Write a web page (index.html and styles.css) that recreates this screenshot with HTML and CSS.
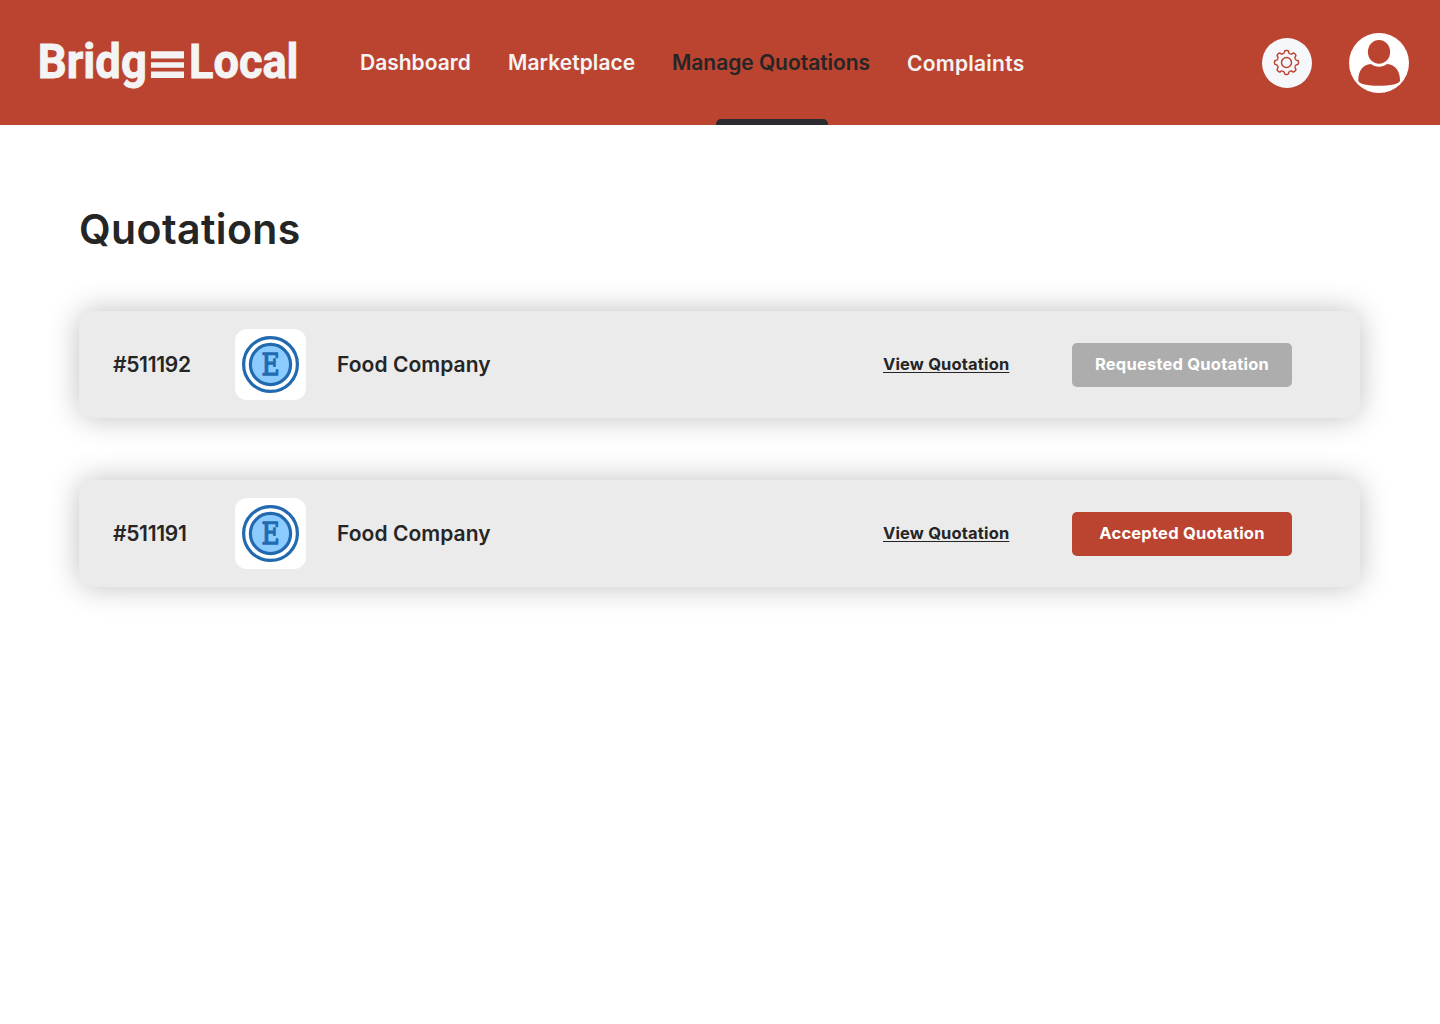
FILE: index.html
```html
<!DOCTYPE html>
<html lang="en">
<head>
<meta charset="utf-8">
<title>BridgeLocal – Quotations</title>
<link rel="stylesheet" href="styles.css">
</head>
<body>
<svg width="0" height="0" class="sprite" aria-hidden="true">
  <defs>
    <g id="coin">
      <circle cx="28.5" cy="28.5" r="26.9" fill="#fff" stroke="#226aaf" stroke-width="3.2"/>
      <circle cx="28.5" cy="28.5" r="20.1" fill="#8ccbff" stroke="#226aaf" stroke-width="3.2"/>
      <text x="19.6" y="39" class="coin-letter" textLength="18.2" lengthAdjust="spacingAndGlyphs">E</text>
    </g>
    <path id="tooth" d="M-3.2-8.900Q-2.300-9.300-2.200-10.300Q-2.100-12-.8-12H.8Q2.100-12 2.200-10.300Q2.300-9.300 3.200-8.900L4.030-8.560"/>
  </defs>
</svg>
<header class="topbar">
  <svg class="logo" width="260" height="56" viewBox="0 0 260 56" role="img" aria-label="BridgeLocal">
    <text x="-1.2" y="41.7" textLength="109" lengthAdjust="spacingAndGlyphs">Bridg</text>
    <path d="M112 15.3h33v7.3h-33zM112 26.3h33v5.4h-33zM112 35.5h33v6.5h-33z"/>
    <text x="150" y="41.7" textLength="109.500" lengthAdjust="spacingAndGlyphs">Local</text>
  </svg>
  <nav class="nav">
    <a class="nav-item dashboard">Dashboard</a>
    <a class="nav-item marketplace">Marketplace</a>
    <a class="nav-item quotations active">Manage Quotations</a>
    <a class="nav-item complaints">Complaints</a>
  </nav>
  <div class="actions">
    <span class="settings">
      <svg width="26" height="26" viewBox="-12.500 -12.500 26 26" fill="none" stroke="#bb4430" stroke-width="1.5">
        <use href="#tooth"/><use href="#tooth" transform="rotate(45)"/><use href="#tooth" transform="rotate(90)"/><use href="#tooth" transform="rotate(135)"/>
        <use href="#tooth" transform="rotate(180)"/><use href="#tooth" transform="rotate(225)"/><use href="#tooth" transform="rotate(270)"/><use href="#tooth" transform="rotate(315)"/>
        <circle r="5"/>
      </svg>
    </span>
    <svg width="60" height="60" viewBox="0 0 60 60">
      <circle cx="30" cy="30" r="30" fill="#fff"/>
      <path fill="#bb4430" d="M22 31C13.500 31.500 9.300 38 9.300 47.500C9.300 51 19 52.800 30 52.800S51 51 51 47.500C51 38 46.500 31.500 38 31C33.500 34.600 26.500 34.600 22 31Z"/>
      <ellipse cx="30" cy="18.900" rx="11.100" ry="11.900" fill="#bb4430"/>
    </svg>
  </div>
</header>
<main class="page">
  <h1 class="title">Quotations</h1>
  <section class="list">
    <article class="card">
      <span class="order">#511192</span>
      <span class="thumb"><svg width="57" height="57"><use href="#coin"/></svg></span>
      <span class="company">Food Company</span>
      <a class="view">View Quotation</a>
      <button class="status requested">Requested Quotation</button>
    </article>
    <article class="card">
      <span class="order">#511191</span>
      <span class="thumb"><svg width="57" height="57"><use href="#coin"/></svg></span>
      <span class="company">Food Company</span>
      <a class="view">View Quotation</a>
      <button class="status accepted">Accepted Quotation</button>
    </article>
  </section>
</main>
</body>
</html>
```
FILE: styles.css
```css
* { box-sizing: border-box; }
body { margin: 0; min-height: 100vh; background: #fff; color: #252525; font-family: Inter, sans-serif; }
.sprite { display: block; height: 0; }
.coin-letter { font: 29px "DejaVu Serif", serif; fill: #226aaf; stroke: #226aaf; stroke-width: 1.3px; stroke-linejoin: round; }

.topbar { display: flex; height: 125px; background: #bb4430; padding: 0 31px 0 39px; }
.logo { margin-top: 36px; fill: #f4f4f4; overflow: visible; font: bold 48px Roboto, sans-serif; }
.logo text { stroke: #f4f4f4; stroke-width: .9px; }
.nav { display: flex; gap: 37px; margin-left: 61px; }
.nav-item { position: relative; height: 125px; line-height: 126px; font-size: 21px; font-weight: 600; color: #f4f4f4; white-space: nowrap; }
.dashboard { width: 111px; }
.marketplace { width: 127px; letter-spacing: .05px; }
.quotations { width: 198px; letter-spacing: -.04px; }
.complaints { width: 118px; line-height: 128px; letter-spacing: .25px; }
.active { color: #252525; }
.active::after { content: ""; position: absolute; left: 44px; bottom: 0; width: 112px; height: 6px; background: #292b2f; border-radius: 5px 5px 0 0; }
.actions { display: flex; align-items: center; gap: 37px; margin-left: auto; }
.settings { display: flex; align-items: center; justify-content: center; width: 50px; height: 50px; border-radius: 50%; background: #f6f7fb; }
.settings svg { overflow: visible; }

.page { padding: 77px 80px 60px 79px; }
.title { margin: 0; font-size: 41px; line-height: 54px; font-weight: 600; letter-spacing: .4px; }
.list { display: flex; flex-direction: column; gap: 62px; margin-top: 55px; }
.card { display: flex; align-items: center; height: 107px; padding: 0 68px 0 34px; background: #ebebeb; border-radius: 14px; box-shadow: 0 0 30px rgba(0, 0, 0, .25); }
.order, .company { font-size: 21px; font-weight: 600; line-height: 28px; white-space: nowrap; }
.order { width: 122px; letter-spacing: -.3px; }
.thumb { display: flex; align-items: center; justify-content: center; width: 71px; height: 71px; background: #fff; border-radius: 12px; }
.company { margin-left: 31px; letter-spacing: .05px; }
.view { width: 127px; margin-left: auto; padding-bottom: 1px; font-size: 16.5px; font-weight: 700; line-height: 24px; letter-spacing: .16px; white-space: nowrap; text-decoration: underline; text-decoration-thickness: 1px; text-underline-offset: 2px; }
.status { width: 220px; height: 44px; margin-left: 62px; padding: 0 0 2px; border: 0; border-radius: 5px; color: #fff; font: 700 16.5px Inter, sans-serif; letter-spacing: .22px; white-space: nowrap; }
.requested { background: #adadad; }
.accepted { background: #bb4430; }
```
